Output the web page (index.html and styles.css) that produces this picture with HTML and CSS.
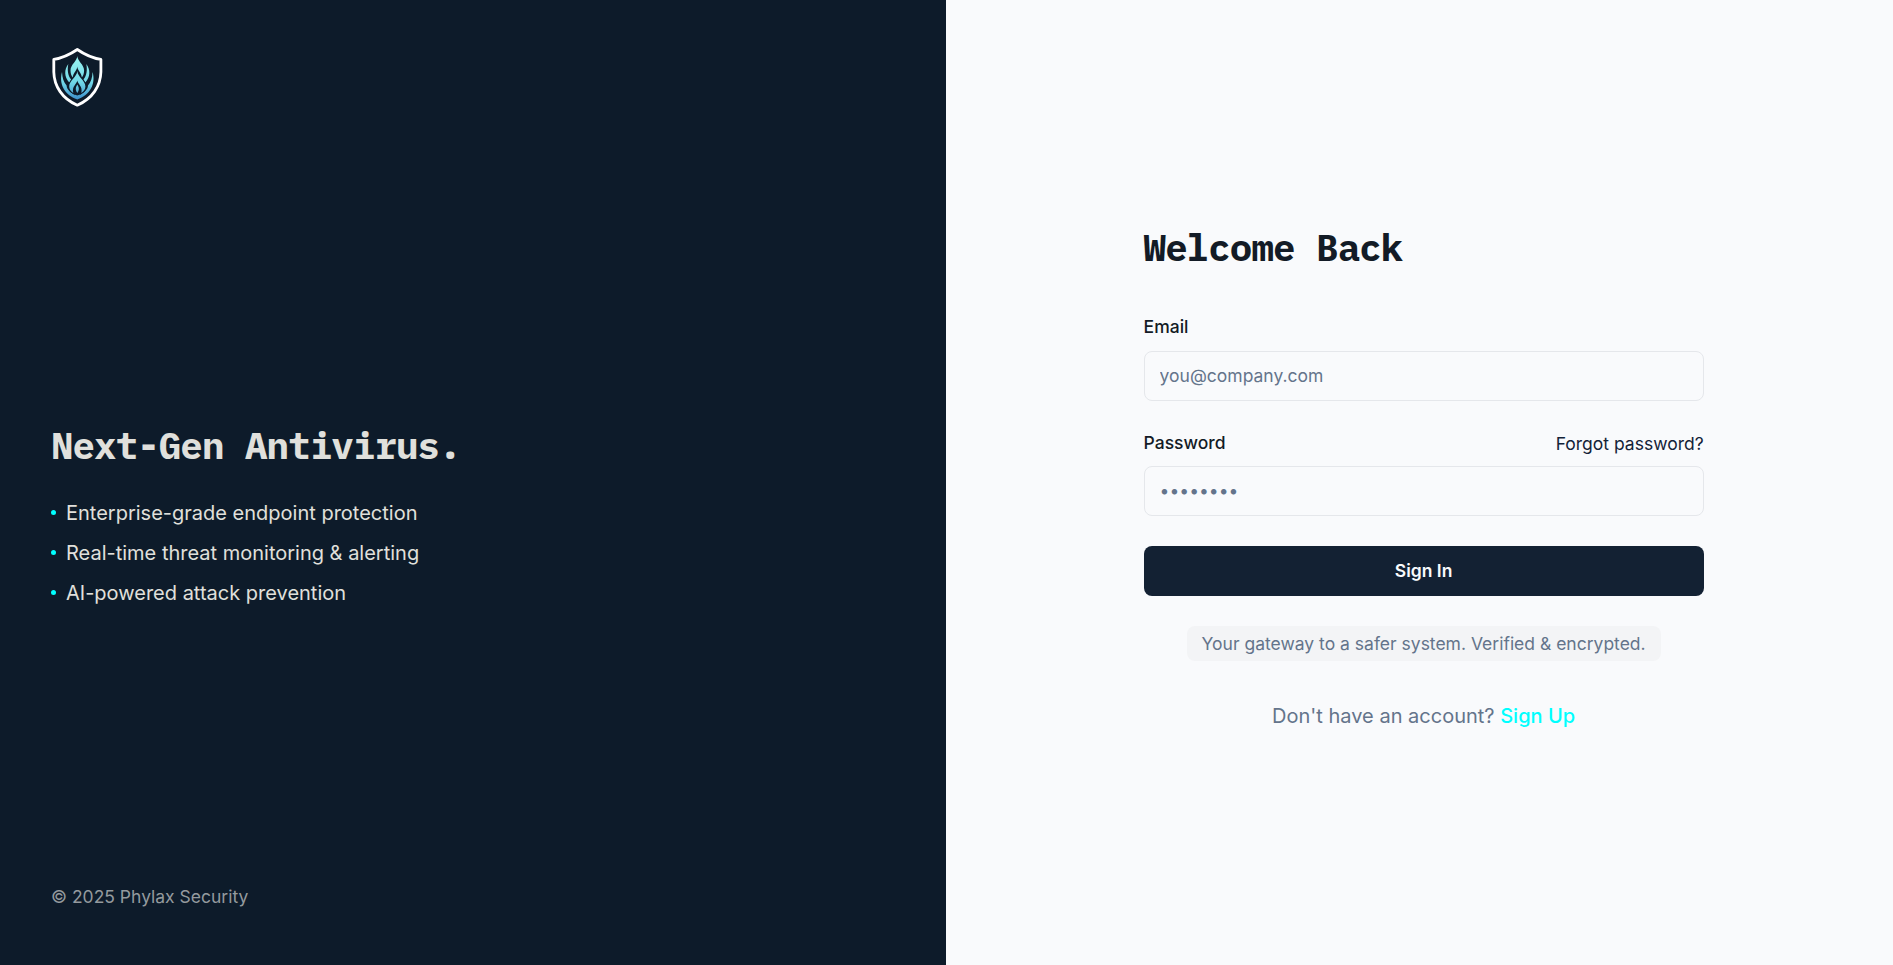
FILE: index.html
```html
<!DOCTYPE html>
<html lang="en">
<head>
<meta charset="utf-8">
<title>Phylax Security</title>
<link rel="stylesheet" href="styles.css">
</head>
<body>
<div class="page">
  <aside class="brand">
    <svg class="logo" viewBox="0 0 76 80" role="img" aria-label="Phylax">
      <defs>
        <linearGradient id="flame" gradientUnits="userSpaceOnUse" x1="0" y1="20" x2="0" y2="64">
          <stop offset="0" stop-color="#9af5f0"/>
          <stop offset=".6" stop-color="#70d7e7"/>
          <stop offset="1" stop-color="#3b8dca"/>
        </linearGradient>
      </defs>
      <path d="M37.300 13.500C31 17.800 22.500 22 13.800 23.400V36C14.100 50 22 62.500 37.300 69.200C52.600 62.500 60.500 50 60.900 36V23.400C52 22 43.500 17.800 37.300 13.500Z" fill="none" stroke="#fff" stroke-width="2.800" stroke-linejoin="round"/>
      <g fill="url(#flame)">
        <path d="M22 36C18.700 48 24.500 59 37.300 63.500C50.100 59 55.900 48 52.600 36C52.200 42 51 46 48 49.500C47.700 54 43.500 57.500 37.300 59.500C31.100 57.500 26.900 54 26.600 49.500C23.600 46 22.400 42 22 36Z"/>
        <path d="M28.300 28C24 33.500 24.200 41 29.200 46.500L31.200 43.500C27.700 39.500 27.200 33.500 28.300 28Z"/>
        <path d="M46.300 28C50.600 33.500 50.400 41 45.400 46.500L43.400 43.500C46.900 39.500 47.400 33.500 46.300 28Z"/>
        <path d="M37.300 20C37.200 25 30.500 28.500 30.500 34.500C30.500 37.800 31.600 40 32.800 41.500C33.100 36.500 37.100 34.500 37.300 30.500C37.500 34.500 41.500 36.500 41.800 41.500C43 40 44.100 37.800 44.100 34.500C44.100 28.500 37.400 25 37.300 20Z"/>
        <path class="front-flame" d="M37.300 35C37 41 29.200 44.500 29.200 50.500C29.200 53.300 31 55.500 33.300 57C31.500 50.500 36.900 48 37.300 44.500C37.700 48 43.100 50.500 41.300 57C43.600 55.500 45.400 53.300 45.400 50.500C45.400 44.500 37.600 41 37.300 35Z"/>
        <path d="M37.300 48.500C35.800 51 34.800 53.500 37.300 57C39.800 53.500 38.800 51 37.300 48.500Z"/>
      </g>
    </svg>
    <section class="pitch">
      <h1 class="title title-light">Next-Gen Antivirus.</h1>
      <ul class="features">
        <li class="feature">Enterprise-grade endpoint protection</li>
        <li class="feature">Real-time threat monitoring &amp; alerting</li>
        <li class="feature">AI-powered attack prevention</li>
      </ul>
    </section>
    <footer class="copyright">© 2025 Phylax Security</footer>
  </aside>
  <main class="auth">
    <form class="form">
      <h2 class="title">Welcome Back</h2>
      <div class="label-row label-row-first"><label class="label" for="email">Email</label></div>
      <input class="input" id="email" type="email" placeholder="you@company.com">
      <div class="label-row">
        <label class="label" for="password">Password</label>
        <a class="forgot">Forgot password?</a>
      </div>
      <input class="input" id="password" type="password" placeholder="••••••••">
      <button class="submit" type="button">Sign In</button>
      <p class="notice">Your gateway to a safer system. Verified &amp; encrypted.</p>
      <p class="signup">Don't have an account? <a class="signup-link">Sign Up</a></p>
    </form>
  </main>
</div>
</body>
</html>
```
FILE: styles.css
```css
* { box-sizing: border-box; margin: 0; padding: 0; }
body { font-family: Inter, sans-serif; background: #f9fafc; color: #131b26; }
.page { display: grid; grid-template-columns: 946px 1fr; height: 965px; }
.brand { display: flex; flex-direction: column; justify-content: space-between; background: #0d1b2a; color: #e0e0dc; padding: 36px 51px 56px 40px; }
.logo { width: 76px; height: 80px; display: block; }
.front-flame { stroke: #0d1b2a; stroke-width: 2; paint-order: stroke; }
.pitch { padding: 30px 0 0 11px; }
.title { font: 700 37.5px/45px "IBM Plex Mono", "Liberation Mono", monospace; letter-spacing: -0.94px; color: #131b26; }
.title-light { color: #e0e0dc; }
.features { list-style: none; display: grid; gap: 10px; margin-top: 30px; }
.feature { display: flex; align-items: center; gap: 10px; font-size: 20px; line-height: 30px; }
.feature::before { content: ""; width: 5px; height: 5px; border-radius: 50%; background: #0ff; }
.copyright { padding-left: 11px; font-size: 17.5px; line-height: 25px; color: #949a9e; }
.auth { padding: 225px 0 0 197.6px; }
.form { width: 560px; display: flex; flex-direction: column; }
.label-row { display: flex; justify-content: space-between; align-items: flex-end; height: 25px; margin: 30px 0 10px; font-size: 17.5px; line-height: 25px; }
.label-row-first { margin: 45px 0 11px; }
.label { font-weight: 500; line-height: 26px; }
.forgot { color: #132238; }
.input { height: 50px; border: 1px solid #e5e7eb; border-radius: 8px; background: transparent; padding: 0 15px 1px; font: 17.5px Inter, sans-serif; }
.input::placeholder { color: #64748b; opacity: 1; }
.submit { height: 50px; margin-top: 30px; padding-bottom: 2px; border: 0; border-radius: 8px; background: #132133; color: #f9fafc; font: 600 17.5px Inter, sans-serif; }
.notice { align-self: center; margin-top: 30px; padding: 5px 15px; border-radius: 8px; background: #f3f4f6; font-size: 17.5px; line-height: 25px; color: #64748b; }
.signup { margin-top: 40px; text-align: center; font-size: 20px; line-height: 30px; color: #64748b; }
.signup-link { color: #0ff; font-weight: 500; }
```
